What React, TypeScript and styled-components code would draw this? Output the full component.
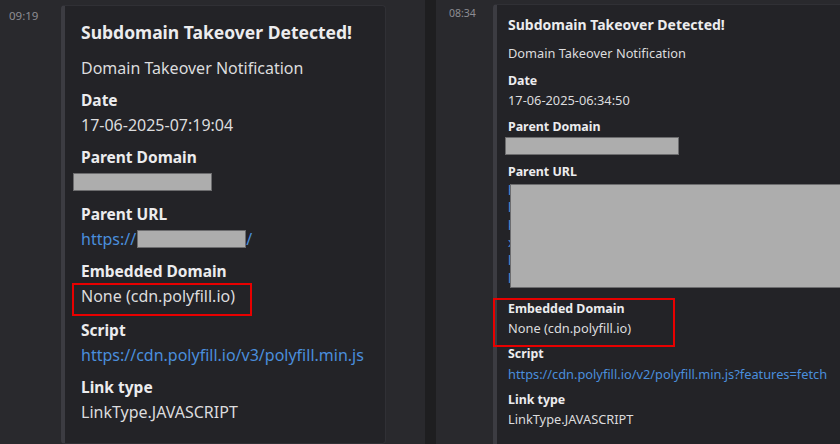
import React from 'react';
import styled, { createGlobalStyle, ThemeProvider } from 'styled-components';

type Scale = {
  s: number;
  top: number;
  stampLeft: number;
  stampW: number;
  stampTop: number;
  stampSize: number;
  padTop: number;
  padX: number;
  padBottom: number;
  fieldsTop: number;
  embedW: number;
};

const leftTheme: Scale = {
  s: 1, top: 5, stampLeft: 9, stampW: 52, stampTop: 3, stampSize: 11.5,
  padTop: 14, padX: 16, padBottom: 18, fieldsTop: 9, embedW: 325,
};
const rightTheme: Scale = {
  s: 0.8, top: 4, stampLeft: 13, stampW: 44, stampTop: 1, stampSize: 10.5,
  padTop: 10, padX: 11, padBottom: 18, fieldsTop: 9, embedW: 420,
};

const t = (fn: (th: Scale) => number | string) => ({ theme }: { theme: any }) => fn(theme as Scale);

const Global = createGlobalStyle`
  html, body { margin: 0; padding: 0; background: #29292d; }
  body { font-family: "Noto Sans", "Open Sans", sans-serif; overflow: hidden; }
`;

const Screen = styled.div`
  display: flex;
  width: 840px;
  height: 444px;
  overflow: hidden;
`;

const Panel = styled.section<{ $fixed?: number }>`
  flex: ${p => (p.$fixed ? `0 0 ${p.$fixed}px` : '1 1 auto')};
  min-width: 0;
  display: flex;
  align-items: flex-start;
  padding: ${t(th => `${th.top}px 0 0 ${th.stampLeft}px`)};
  background: #29292d;
  overflow: hidden;
  box-sizing: border-box;
`;

const Divider = styled.div`
  flex: 0 0 11px;
  background: #1e1e20;
`;

const Stamp = styled.time`
  flex: 0 0 ${t(th => th.stampW)}px;
  margin-top: ${t(th => th.stampTop)}px;
  font-size: ${t(th => th.stampSize)}px;
  line-height: 16px;
  color: #8d8d93;
`;

const Embed = styled.article`
  flex: 0 0 ${t(th => th.embedW)}px;
  box-sizing: border-box;
  background: #232327;
  border: 1px solid #303035;
  border-left: 4px solid #3c3c42;
  border-radius: 4px;
  padding: ${t(th => `${th.padTop}px ${th.padX}px ${th.padBottom}px ${th.padX}px`)};
  display: flex;
  flex-direction: column;
`;

const Title = styled.h2`
  margin: 0;
  font-size: ${t(th => 17.5 * th.s)}px;
  line-height: ${t(th => 24 * th.s)}px;
  font-weight: 700;
  color: #ececee;
  white-space: nowrap;
`;

const Description = styled.p`
  margin: ${t(th => 13 * th.s)}px 0 0;
  font-size: ${t(th => 16 * th.s)}px;
  line-height: ${t(th => 22 * th.s)}px;
  color: #dcdcde;
  white-space: nowrap;
`;

const Fields = styled.div`
  margin-top: ${t(th => th.fieldsTop)}px;
  display: flex;
  flex-direction: column;
  gap: ${t(th => 7 * th.s)}px;
`;

const Field = styled.div<{ $extra?: number }>`
  display: flex;
  flex-direction: column;
  margin-bottom: ${p => p.$extra || 0}px;
`;

const Label = styled.div`
  font-size: ${t(th => 15.5 * th.s)}px;
  line-height: ${t(th => 24 * th.s)}px;
  font-weight: 700;
  color: #ececee;
  white-space: nowrap;
`;

const Value = styled.div<{ $link?: boolean }>`
  font-size: ${t(th => 16 * th.s)}px;
  line-height: ${t(th => 26 * th.s)}px;
  min-height: ${t(th => 26 * th.s)}px;
  color: ${p => (p.$link ? '#4a8edc' : '#dcdcde')};
  white-space: nowrap;
  display: flex;
  align-items: center;
`;

const Redact = styled.span<{ $w: number; $shift?: number }>`
  display: inline-block;
  flex: 0 0 auto;
  width: ${p => p.$w}px;
  height: 18px;
  box-sizing: border-box;
  background: #adadad;
  border: 1px solid #6c6c6e;
  margin-left: ${p => p.$shift || 0}px;
`;

const Marked = styled.div<{ $t: number; $r: number; $b: number; $l: number }>`
  position: relative;
  align-self: flex-start;
  &::after {
    content: '';
    position: absolute;
    top: ${p => p.$t}px;
    right: ${p => p.$r}px;
    bottom: ${p => p.$b}px;
    left: ${p => p.$l}px;
    border: 2px solid #e80000;
    pointer-events: none;
  }
`;

const UrlBlock = styled.div`
  position: relative;
  font-size: ${t(th => 16 * th.s)}px;
  line-height: 17.6px;
  padding-bottom: 6px;
  color: #4a8edc;
  white-space: nowrap;
`;

const UrlLine = styled.div``;

const Cover = styled.div`
  position: absolute;
  top: 2px;
  left: 2px;
  right: -4px;
  height: 104px;
  box-sizing: border-box;
  background: #adadad;
  border: 1px solid #6c6c6e;
`;

const hiddenLines = [
  'hwww.xxxxxxxxxxxxxxxxxxxxxxxxxxxxxxxxxx',
  'lxxxxxxxxxxxxxxxxxxxxxxxxxxxxxxxxxxxxx',
  'kxxxxxxxxxxxxxxxxxxxxxxxxxxxxxxxxxxxx',
  'xxxxxxxxxxxxxxxxxxxxxxxxxxxxxxxxxxxxx',
  'lxxxxxxxxxxxxxxxxxxxxxxxxxxxxxxxxxxxx',
  'lxxxxxxxxxxxxxxxxxxxxxxxxxgxxxxxxxxxpxxj',
];

const LeftEmbed = () => (
  <Embed>
    <Title>Subdomain Takeover Detected!</Title>
    <Description>Domain Takeover Notification</Description>
    <Fields>
      <Field>
        <Label>Date</Label>
        <Value>17-06-2025-07:19:04</Value>
      </Field>
      <Field>
        <Label>Parent Domain</Label>
        <Value><Redact $w={139} $shift={-8} /></Value>
      </Field>
      <Field>
        <Label>Parent URL</Label>
        <Value $link>https://<Redact $w={109} $shift={1} />/</Value>
      </Field>
      <Field $extra={2}>
        <Label>Embedded Domain</Label>
        <Marked $t={0} $r={-17} $b={-7} $l={-9}>
          <Value>None (cdn.polyfill.io)</Value>
        </Marked>
      </Field>
      <Field>
        <Label>Script</Label>
        <Value $link>https://cdn.polyfill.io/v3/polyfill.min.js</Value>
      </Field>
      <Field>
        <Label>Link type</Label>
        <Value>LinkType.JAVASCRIPT</Value>
      </Field>
    </Fields>
  </Embed>
);

const RightEmbed = () => (
  <Embed>
    <Title>Subdomain Takeover Detected!</Title>
    <Description>Domain Takeover Notification</Description>
    <Fields>
      <Field>
        <Label>Date</Label>
        <Value>17-06-2025-06:34:50</Value>
      </Field>
      <Field>
        <Label>Parent Domain</Label>
        <Value><Redact $w={174} $shift={-3} /></Value>
      </Field>
      <Field>
        <Label>Parent URL</Label>
        <UrlBlock>
          {hiddenLines.map((l, i) => (
            <UrlLine key={i}>{l}</UrlLine>
          ))}
          <Cover />
        </UrlBlock>
      </Field>
      <Marked $t={-1} $r={-44} $b={-8} $l={-15}>
        <Field>
          <Label>Embedded Domain</Label>
          <Value>None (cdn.polyfill.io)</Value>
        </Field>
      </Marked>
      <Field>
        <Label>Script</Label>
        <Value $link>https://cdn.polyfill.io/v2/polyfill.min.js?features=fetch</Value>
      </Field>
      <Field>
        <Label>Link type</Label>
        <Value>LinkType.JAVASCRIPT</Value>
      </Field>
    </Fields>
  </Embed>
);

export default function App() {
  return (
    <>
      <Global />
      <Screen>
        <ThemeProvider theme={leftTheme}>
          <Panel $fixed={425}>
            <Stamp>09:19</Stamp>
            <LeftEmbed />
          </Panel>
        </ThemeProvider>
        <Divider />
        <ThemeProvider theme={rightTheme}>
          <Panel>
            <Stamp>08:34</Stamp>
            <RightEmbed />
          </Panel>
        </ThemeProvider>
      </Screen>
    </>
  );
}
